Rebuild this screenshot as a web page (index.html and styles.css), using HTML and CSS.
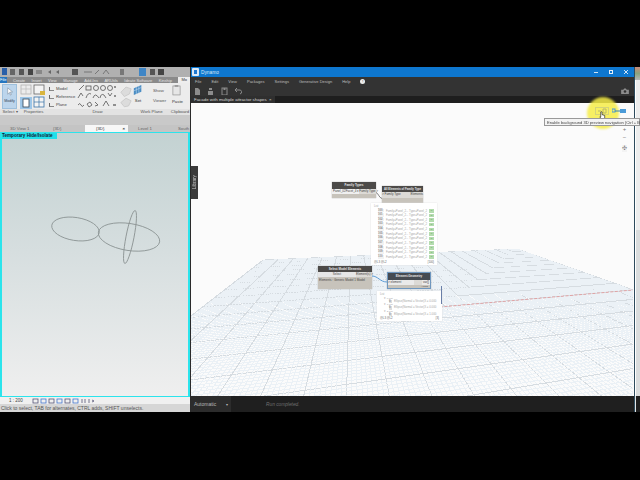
FILE: index.html
```html
<!DOCTYPE html>
<html lang="en">
<head>
<meta charset="utf-8">
<title>Revit and Dynamo</title>
<link rel="stylesheet" href="styles.css">
</head>
<body>
<div class="screen">
  <section class="revit">
    <div class="qat">
      <svg class="qat-icons" viewBox="0 0 190 10"><rect x="2" y="1" width="5" height="7" fill="#2a5fa8"/><rect x="10" y="2" width="5" height="6" fill="#666"/><rect x="19" y="2" width="5" height="6" fill="#555"/><rect x="28" y="2" width="5" height="6" fill="#444"/><rect x="36" y="3" width="6" height="4" fill="#888"/><path d="M48 5l3-2v4zM56 5l3-2v4z" fill="#666"/><rect x="72" y="2" width="6" height="6" fill="#555"/><path d="M84 5h8M95 7l4-4M103 7l3-4 3 4" stroke="#777" fill="none"/><rect x="120" y="2" width="4" height="6" fill="#777"/><rect x="139" y="1" width="7" height="8" fill="#3f86c6"/><rect x="150" y="2" width="5" height="6" fill="#555"/><rect x="158" y="2" width="6" height="6" fill="#444"/></svg>
    </div>
    <nav class="tabs">
      <span class="tab-file">File</span><span>Create</span><span>Insert</span><span>View</span><span>Manage</span><span>Add-Ins</span><span>ARUtils</span><span>Ideate Software</span><span>Kinship</span><span class="tab-active">Mo</span>
    </nav>
    <div class="ribbon">
      <div class="panel panel-select">
        <div class="modify"><svg viewBox="0 0 10 10" class="cursor-icon"><path d="M3 1v7l2-2 1 3 1-.5-1-3h2.500z" fill="#fff" stroke="#789"  stroke-width=".6"/></svg><span>Modify</span></div>
        <div class="panel-label">Select ▾</div>
      </div>
      <div class="panel panel-props">
        <svg class="props-icons" viewBox="0 0 27 25"><rect x="1" y="1" width="10" height="9" fill="#ececec" stroke="#aaa" stroke-width=".7"/><path d="M6 1v9M1 5h10" stroke="#bbb" stroke-width=".7"/><rect x="14" y="1" width="10" height="9" fill="#f4f4f4" stroke="#666" stroke-width=".8"/><rect x="20" y="7" width="5" height="4" fill="#d9b53d"/><rect x="0" y="13" width="12" height="12" fill="#9dc6e8"/><rect x="3" y="15" width="6" height="8" fill="#fff" stroke="#345" stroke-width=".8"/><rect x="14" y="13" width="10" height="10" fill="#f4f4f4" stroke="#3b73a8" stroke-width=".8"/><path d="M14 18h10M19 13v10" stroke="#3b73a8" stroke-width=".7"/></svg>
        <div class="panel-label">Properties</div>
      </div>
      <div class="panel panel-model">
        <ul class="model-list"><li>Model</li><li>Reference</li><li>Plane</li></ul>
        <div class="panel-label">&nbsp;</div>
      </div>
      <div class="panel panel-draw">
        <svg class="draw-icons" viewBox="0 0 42 24"><g fill="none" stroke="#555" stroke-width=".8"><path d="M2 6l5-5"/><rect x="9" y="2" width="5" height="4"/><circle cx="19" cy="4" r="2.500"/><circle cx="26" cy="4" r="2.500"/><circle cx="33" cy="4" r="2.500"/><path d="M1 14l3-5 2 3M9 14q2-6 5-4M16 14q2-6 6 0M23 14q1-5 4-3l2 3M31 9l2 3 2-3"/><path d="M1 21q2-3 3 0t3 0M10 20l3-2 2 3-3 2zM18 18l3 3-3 1M26 22l3-5 3 5"/></g><path d="M37 3h2M37 12h2M36 21h3" stroke="#333"/></svg>
        <div class="panel-label">Draw</div>
      </div>
      <div class="panel panel-faded">
        <svg class="faded-icons" viewBox="0 0 14 26"><path d="M1 8l6-6 6 2-2 6-6 3zM1 20l6-5 6 3-3 6-5 1z" fill="#dcdcdc" stroke="#c9c9c9"/></svg>
        <div class="panel-label">&nbsp;</div>
      </div>
      <div class="panel panel-work">
        <div class="work-row">
          <div class="work-set"><svg viewBox="0 0 12 14"><path d="M1 5l9-4v8l-9 4z" fill="#4b8dc4"/><path d="M1 8l9-4M4 3v9M7 2v9" stroke="#cfe3f4" stroke-width=".6"/></svg><span>Set</span></div>
          <ul class="work-list"><li>Show</li><li>Viewer</li></ul>
        </div>
        <div class="panel-label">Work Plane</div>
      </div>
      <div class="panel panel-clip">
        <div class="paste"><svg viewBox="0 0 10 13"><rect x="1" y="2" width="8" height="10" fill="#e6e6e6" stroke="#8a8a8a" stroke-width=".7"/><rect x="3" y="1" width="4" height="2" fill="#9a9a9a"/></svg><span>Paste</span></div>
        <div class="panel-label">Clipboard</div>
      </div>
    </div>
    <div class="band"></div>
    <div class="view-tabs">
      <span class="vtab">3D View 1</span><span class="vtab">{3D}</span><span class="vtab vtab-active">{3D} <b>×</b></span><span class="vtab">Level 1</span><span class="vtab vtab-last">South</span>
    </div>
    <div class="viewport">
      <div class="temp-label">Temporary Hide/Isolate</div>
      <svg class="sketch" viewBox="0 0 186 265">
        <g fill="none" stroke="#8e9696" stroke-width=".9">
          <ellipse cx="73.500" cy="96" rx="24" ry="11.500" transform="rotate(9 73.500 96)"/>
          <ellipse cx="127" cy="104" rx="31" ry="13.500" transform="rotate(9 127 104)"/>
          <ellipse cx="128" cy="104" rx="27" ry="4" transform="rotate(-79 128 104)"/>
        </g>
      </svg>
    </div>
    <div class="scale-row"><span>1 : 200</span><svg viewBox="0 0 62 6" class="scale-icons"><g fill="none" stroke="#557" stroke-width=".8"><rect x="1" y="1" width="5" height="4"/><rect x="9" y="1" width="5" height="4" stroke="#47c"/><rect x="17" y="1" width="5" height="4"/><rect x="25" y="1" width="5" height="4" stroke="#47c"/><rect x="33" y="1" width="5" height="4"/><rect x="41" y="1" width="5" height="4" stroke="#47c"/><path d="M50 1v4M53 1v4M57 1v4M60 2l2 1-2 1"/></g></svg></div>
    <div class="status">Click to select, TAB for alternates, CTRL adds, SHIFT unselects.</div>
  </section>

  <section class="dynamo">
    <header class="dyn-title"><svg class="dyn-logo" viewBox="0 0 7 8"><rect width="7" height="8" rx="1" fill="#dbe9f7"/><rect x="2" y="2" width="3" height="4" fill="#1f78d1"/></svg><span>Dynamo</span>
      <div class="win-ctrls"><span class="win-min"></span><span class="win-max"></span><svg class="win-close" viewBox="0 0 4 4"><path d="M0 0l4 4M4 0l-4 4" stroke="#fff" stroke-width=".8"/></svg></div>
    </header>
    <nav class="dyn-menu"><span>File</span><span>Edit</span><span>View</span><span>Packages</span><span>Settings</span><span>Generative Design</span><span>Help</span><i class="info">!</i></nav>
    <div class="dyn-tools">
      <svg viewBox="0 0 60 8" class="tool-icons"><g fill="#8c8c8c"><path d="M0 1h3l2 2v5H0z"/><path d="M13 4h5v4h-5zM14 1h3v2h-3z"/><rect x="27" y="1" width="5" height="7" fill="none" stroke="#8c8c8c"/><rect x="28.500" y="1" width="2" height="2"/></g><path d="M40 3h4a2 2 0 0 1 1 4M40 3l2-2M40 3l2 2" fill="none" stroke="#8c8c8c"/></svg>
      <svg viewBox="0 0 9 7" class="camera"><path d="M0 2h2.500l1-1.500h2l1 1.500H9v5H0z" fill="#8c8c8c"/><circle cx="4.500" cy="4" r="1.500" fill="#333"/></svg>
    </div>
    <div class="dyn-tabbar"><span class="dyn-tab">Facade with multiple attractor shapes <b>×</b></span></div>
    <main class="canvas">
      <svg id="grid" class="grid" width="442" height="293" viewBox="191 103 442 293"></svg>

      <div class="library">Library</div>

      <div class="node n-family"><div class="nhead">Family Types</div><div class="nports"><span class="combo">Panel_02Facet_4 ▾</span><span>Family Type &gt;</span></div></div>
      <div class="node n-all"><div class="nhead">All Elements of Family Type</div><div class="nports"><span>&gt; Family Type</span><span>Elements</span></div></div>
      <svg class="wire wire-a" viewBox="0 0 10 12"><path d="M0 1C4 2 5 10 10 11" stroke="#333" fill="none"/></svg>

      <div class="watch w-family">
        <div class="wlabel">List</div>
        <div class="wrow"><b>100</b><span>Family=Panel_2... Type=Panel_2</span><em>ID</em></div>
        <div class="wrow"><b>101</b><span>Family=Panel_2... Type=Panel_2</span><em>ID</em></div>
        <div class="wrow"><b>102</b><span>Family=Panel_2... Type=Panel_2</span><em>ID</em></div>
        <div class="wrow"><b>103</b><span>Family=Panel_2... Type=Panel_2</span><em>ID</em></div>
        <div class="wrow"><b>104</b><span>Family=Panel_2... Type=Panel_2</span><em>ID</em></div>
        <div class="wrow"><b>105</b><span>Family=Panel_2... Type=Panel_2</span><em>ID</em></div>
        <div class="wrow"><b>106</b><span>Family=Panel_2... Type=Panel_2</span><em>ID</em></div>
        <div class="wrow"><b>107</b><span>Family=Panel_2... Type=Panel_2</span><em>ID</em></div>
        <div class="wrow"><b>108</b><span>Family=Panel_2... Type=Panel_2</span><em>ID</em></div>
        <div class="wrow"><b>109</b><span>Family=Panel_2... Type=Panel_2</span><em>ID</em></div>
        <div class="wrow"><b>110</b><span>Family=Panel_2... Type=Panel_2</span><em>ID</em></div>
        <div class="wfoot"><span>@L3 @L2</span><span>{100}</span></div>
      </div>

      <div class="node n-select"><div class="nhead">Select Model Elements</div><div class="nports"><span class="btn">Select</span><span>Element(s) &gt;</span></div><div class="ninfo">Elements : Generic Model 1 Model</div></div>
      <div class="node n-geom"><div class="nhead">Element.Geometry</div><div class="nports"><span class="inport">&gt; element</span><span class="outport">var[]</span></div><div class="nauto">AUTO</div></div>
      <svg class="wire wire-b" viewBox="0 0 15 8"><path d="M0 1C6 1 8 7 15 7" stroke="#5b9bd5" fill="none"/></svg>

      <div class="watch w-geom">
        <div class="wlabel">List</div>
        <div class="wsub">▾ 0 List</div>
        <div class="wrow"><b>0</b><span>Ellipse(Normal = Vector(X = 0.000</span></div>
        <div class="wsub">▾ 1 List</div>
        <div class="wrow"><b>0</b><span>Ellipse(Normal = Vector(X = 0.000</span></div>
        <div class="wsub">▾ 2 List</div>
        <div class="wrow"><b>0</b><span>Ellipse(Normal = Vector(X = 1.000</span></div>
        <div class="wfoot"><span>@L3 @L2</span><span>{3}</span></div>
        <span class="wscroll"></span>
      </div>

      <div class="highlight"></div>
      <div class="nav-icons">
        <svg class="nav-cam" viewBox="0 0 14 8"><rect x=".5" y=".5" width="13" height="7" fill="none" stroke="#d4d47a"/><path d="M3 4h3M8 2h3v4H8z" fill="none" stroke="#b9b96a"/></svg>
        <svg class="nav-graph" viewBox="0 0 14 8"><rect x="0" y="2" width="3" height="3" fill="none" stroke="#4b9bd8"/><rect x="8" y="2" width="6" height="4" fill="#4b9bd8"/><path d="M3 4h5" stroke="#2f7fb8"/></svg>
      </div>
      <div class="zoom-ctrls"><span>+</span><span>−</span><span class="fit">✣</span></div>
      <svg class="hand" viewBox="0 0 8 10"><path d="M2 1a1 1 0 0 1 1.500 0v3l3 1v3l-1 2H3L1 6.500l1 0z" fill="#fff" stroke="#111" stroke-width=".7"/></svg>
    </main>
    <footer class="dyn-foot"><div class="run-mode"><span>Automatic</span><i>▾</i></div><span class="run-state">Run completed.</span></footer>
    <div class="tip">Enable background 3D preview navigation (Ctrl + B)</div>
  </section>
  <aside class="sliver"><span class="sl-top"></span><span class="sl-light"></span><span class="sl-noise"></span><span class="sl-dark"></span></aside>
</div>
<script src="grid.js"></script>
</body>
</html>
```

FILE: styles.css
```css
* { box-sizing: border-box; }
html, body { margin: 0; height: 100%; background: #000; overflow: hidden; }
body { font-family: "Liberation Sans", Arial, sans-serif; color: #333; }
ul { list-style: none; margin: 0; padding: 0; }
svg { display: block; }

.screen {
  width: 640px; height: 480px; padding: 67px 0 68px;
  display: flex; background: #000; filter: blur(.4px);
}

/* Revit */
.revit { width: 190px; display: flex; flex-direction: column; background: #e4e4e4; overflow: hidden; }
.qat { height: 10px; background: #b0b0b0; }
.qat-icons { width: 190px; height: 10px; }
.tabs { height: 6px; background: #8a8a8a; display: flex; align-items: center; gap: 6.500px; color: #e4e4e4; font-size: 4px; white-space: nowrap; }
.tab-file { background: #2576c0; color: #fff; width: 13px; height: 6px; line-height: 6px; text-align: center; }
.tab-active { background: #eee; color: #333; height: 6px; line-height: 6px; padding: 0 3px; flex: 1; }
.ribbon { height: 32px; background: #ececec; display: flex; }
.panel { display: flex; flex-direction: column; justify-content: space-between; font-size: 4.300px; white-space: nowrap; padding-top: 1px; }
.panel-label { height: 6px; line-height: 6px; text-align: center; color: #555; background: #e2e2e2; }
.panel-select { width: 20px; }
.modify { width: 15px; height: 25px; margin-left: 2px; background: #bcd5ec; border: 1px solid #9dbfdc; display: flex; flex-direction: column; align-items: center; gap: 3px; font-size: 3.600px; color: #345; }
.cursor-icon { width: 9px; height: 9px; margin-top: 2px; }
.panel-props { width: 27px; }
.props-icons { width: 27px; height: 25px; }
.panel-model { width: 29px; }
.model-list { padding: 2px 0 0 9px; display: flex; flex-direction: column; gap: 3px; font-size: 4.200px; line-height: 5px; color: #444; }
.model-list li { position: relative; }
.model-list li::before { content: ""; position: absolute; left: -7px; top: 1px; width: 4px; height: 3px; border-left: 1px solid #666; border-bottom: 1px solid #888; }
.panel-draw { width: 43px; }
.draw-icons { width: 42px; height: 24px; margin-left: 1px; }
.panel-faded { width: 14px; }
.faded-icons { width: 12px; height: 25px; margin-left: 1px; }
.panel-work { width: 37px; }
.work-row { display: flex; gap: 5px; }
.work-set { width: 10px; font-size: 4.300px; text-align: center; }
.work-set svg { width: 10px; height: 12px; margin-bottom: 2px; }
.work-list { padding-top: 4px; display: flex; flex-direction: column; gap: 5px; line-height: 5px; color: #555; padding-left: 5px; }
.panel-clip { flex: 1; }
.paste { width: 10px; margin-left: 2px; font-size: 4.300px; }
.paste svg { width: 9px; height: 12px; margin: 0 0 3px; }
.band { height: 10px; background: #c9c9c9; }
.view-tabs { height: 7px; background: #c4c4c4; display: flex; font-size: 4.300px; line-height: 7px; white-space: nowrap; color: #666; }
.vtab { width: 43px; padding-left: 10px; flex: none; }
.vtab:nth-child(2) { width: 42px; }
.vtab-active { background: #f7f7f7; color: #333; width: 43px; padding-left: 11px; display: flex; justify-content: space-between; padding-right: 3px; }
.vtab-last { width: 19px; padding-left: 7px; }
.viewport {
  height: 266px; border: 1.500px solid #2be4ec; border-left-width: 2px; border-right-width: 2px;
  background: linear-gradient(#c3d2d2 0, #d6dedf 45%, #efefef 100%);
  position: relative;
}
.temp-label { width: 55px; height: 6.500px; background: #20e0ea; color: #123; font-size: 4.600px; font-weight: bold; line-height: 6.500px; white-space: nowrap; }
.sketch { position: absolute; left: 0; top: 0; width: 186px; height: 265px; }
.scale-row { height: 7px; background: #f0f0f0; display: flex; align-items: center; gap: 9px; padding-left: 9px; font-size: 4.500px; color: #444; }
.scale-icons { width: 62px; height: 6px; }
.status { height: 8px; background: #d6d6d6; font-size: 5px; line-height: 8px; padding-left: 1px; color: #555; white-space: nowrap; }

/* Dynamo */
.dynamo { width: 444px; display: flex; flex-direction: column; background: #2b2b2b; position: relative; padding: 0 0 0 1px; }
.dyn-title { height: 10px; background: #0e77cf; display: flex; align-items: center; gap: 2px; padding-left: 1px; color: #dbe9f7; font-size: 4.800px; }
.dyn-logo { width: 7px; height: 8px; }
.win-ctrls { margin-left: auto; display: flex; align-items: center; gap: 11px; padding-right: 6px; }
.win-min { width: 4px; height: 1px; background: #cfe3f4; }
.win-max { width: 4px; height: 4px; border: 1px solid #e6f0fa; }
.win-close { width: 4px; height: 4px; }
.dyn-menu { height: 9px; background: #333; display: flex; align-items: center; gap: 10px; padding-left: 4px; color: #bdbdbd; font-size: 4px; line-height: 5px; white-space: nowrap; }
.info { width: 5px; height: 5px; border-radius: 50%; background: #eee; color: #333; font-size: 4px; line-height: 5px; text-align: center; font-style: normal; }
.dyn-tools { height: 10px; background: #333; display: flex; justify-content: space-between; align-items: center; padding: 0 5px 0 4px; }
.tool-icons { width: 60px; height: 8px; }
.camera { width: 8px; height: 6px; }
.dyn-tabbar { height: 7px; background: #1e1e1e; display: flex; }
.dyn-tab { background: #2f2f2f; color: #d6d6d6; font-size: 4.400px; line-height: 7px; padding: 0 3px; white-space: nowrap; }
.dyn-tab b { font-weight: normal; margin-left: 1px; }

.canvas { height: 293px; background: #fbfbfb; position: relative; }
.grid { position: absolute; left: 0; top: 0; }
.library { position: absolute; left: 0; top: 63px; width: 7px; height: 33px; background: #3b3b3b; color: #ccc; font-size: 4.500px; writing-mode: vertical-rl; transform: rotate(180deg); text-align: center; line-height: 7px; }

.node { position: absolute; background: #c7c3bb; font-size: 3px; color: #444; white-space: nowrap; box-shadow: 0 0 1px #999; }
.nhead { background: #4c4a48; color: #e8e8e8; font-weight: bold; text-align: center; height: 6px; line-height: 6px; }
.nports { display: flex; justify-content: space-between; height: 5px; line-height: 5px; background: #dcdad6; }
.n-family { left: 141px; top: 79px; width: 44px; height: 16px; }
.n-family .nhead { height: 6.500px; }
.combo { background: #f0f0f0; padding-left: 1px; }
.n-all { left: 191px; top: 83px; width: 41px; height: 18px; }
.n-all .nhead { height: 5.500px; font-size: 2.800px; }
.n-all .nports { height: 6px; }
.n-select { left: 127px; top: 163px; width: 54px; height: 23px; }
.btn { flex: 0 0 38px; text-align: center; background: #e6e6e6; }
.ninfo { padding: 1px; line-height: 5px; height: 7px; }
.n-geom { left: 196px; top: 169px; width: 44px; height: 17px; border: .5px solid #6f97bf; }
.n-geom .nhead { height: 6.500px; background: #464b52; }
.inport { flex: 0 0 26px; background: #eaeaea; }
.outport { flex: 0 0 8px; background: #eaeaea; text-align: center; }
.nauto { text-align: right; font-size: 2.500px; line-height: 4px; padding-right: 2px; }
.wire { position: absolute; }
.wire-a { left: 185px; top: 87px; width: 6px; height: 11px; }
.wire-b { left: 181px; top: 172px; width: 15px; height: 8px; }

.watch { position: absolute; background: #fff; font-size: 2.800px; color: #a6a6a6; white-space: nowrap; box-shadow: 0 0 1.500px #ddd; padding: 2px 3px; }
.w-family { left: 180px; top: 100px; width: 66px; height: 62px; }
.wlabel { height: 3.500px; line-height: 3.500px; }
.wrow { display: flex; gap: 2px; height: 4.650px; line-height: 4.650px; padding-left: 4px; }
.wrow b { width: 6px; color: #888; background: #f2f2f2; height: 3.600px; line-height: 3.600px; }
.wrow span { flex: 1; }
.wrow em { width: 5px; height: 3.500px; line-height: 3.500px; background: #b4dcae; color: #6b9e66; font-style: normal; text-align: center; font-size: 2px; margin-top: .5px; }
.wfoot { position: absolute; left: 3px; right: 3px; bottom: 1px; display: flex; justify-content: space-between; color: #666; font-size: 2.800px; line-height: 4px; }
.w-geom { left: 186px; top: 188px; width: 65px; height: 30px; }
.w-geom .wrow { padding-left: 9px; height: 3.600px; line-height: 3.600px; }
.w-geom .wrow b { width: 3px; background: #ddd; }
.wsub { height: 3px; line-height: 3px; padding-left: 4px; font-size: 2.500px; }
.wscroll { position: absolute; right: 0; top: -5px; width: 1px; height: 18px; background: #6a7fa8; }

.nav-icons { position: absolute; left: 404px; top: 4px; display: flex; gap: 3px; align-items: center; }
.nav-cam { width: 14px; height: 8px; }
.nav-graph { width: 14px; height: 8px; }
.zoom-ctrls { position: absolute; left: 430px; top: 23px; width: 7px; display: flex; flex-direction: column; gap: 1px; align-items: center; color: #777; font-size: 6px; line-height: 7px; }
.zoom-ctrls .fit { margin-top: 3px; font-size: 6px; background: #f3f3f3; }
.highlight { position: absolute; left: 396px; top: -6px; width: 32px; height: 32px; border-radius: 50%; background: rgba(246, 236, 70, .85); filter: blur(1px); }
.hand { position: absolute; left: 408px; top: 8px; width: 7px; height: 9px; }

.dyn-foot { height: 16px; background: #1f1f1f; display: flex; align-items: center; font-size: 5px; color: #8c8c8c; }
.run-mode { width: 40px; height: 16px; background: #2c2c2c; display: flex; justify-content: space-between; align-items: center; padding: 0 3px; margin-right: 35px; color: #b6b6b6; }
.run-mode i { font-style: normal; font-size: 4px; }
.run-state { font-style: italic; font-size: 4.800px; color: #6f6f6f; }
.tip { position: absolute; left: 354px; top: 51px; width: 96px; height: 8px; background: #f4f4f4; border: .5px solid #999; font-size: 4.100px; line-height: 7px; padding-left: 2px; color: #444; white-space: nowrap; z-index: 3; }

.sliver { flex: 1; display: flex; flex-direction: column; background: #e6e7e8; border-left: 1px solid #2d4a5c; }
.sl-top { height: 13px; background: linear-gradient(#c98a7a, #8aa37e 50%, #b7b7b7); }
.sl-light { height: 150px; background: #eceded; border-left: 1px solid #fff; }
.sl-noise { flex: 1; background: #d9dcdd; border-left: 1px solid #fff; }
.sl-dark { height: 16px; background: #1f1f1f; border-left: 1px solid #dfe3e5; }
```

FILE: grid.js
```js
// Builds the perspective ground grid of the 3D preview from its two vanishing points.
(function () {
  var svg = document.getElementById('grid');
  var NS = 'http://www.w3.org/2000/svg';
  var B = [517, 249], VP1 = [352, 191], VP2 = [1662, 199];
  var a = 0.1816, b = 0.826, N = 160;
  svg.setAttribute('shape-rendering', 'crispEdges');

  function pt(u, v) {
    var d = 1 - a * u - b * v;
    return [(B[0] - a * u * VP2[0] - b * v * VP1[0]) / d,
            (B[1] - a * u * VP2[1] - b * v * VP1[1]) / d];
  }
  function line(p, q, color, width) {
    var l = document.createElementNS(NS, 'line');
    l.setAttribute('x1', p[0].toFixed(2));
    l.setAttribute('y1', p[1].toFixed(2));
    l.setAttribute('x2', q[0].toFixed(2));
    l.setAttribute('y2', q[1].toFixed(2));
    l.setAttribute('stroke', color);
    l.setAttribute('stroke-width', width);
    svg.appendChild(l);
  }
  var EPS = 0.02;
  for (var i = 0; i <= N; i++) {
    var t = i / N;
    var major = i % 8 === 0;
    var color = major ? '#d6dce1' : '#ebf1f6';
    // lines running towards VP1
    var vmax = Math.min(1, (1 - a * t - EPS) / b);
    line(pt(t, 0), pt(t, vmax), color, 1);
    // lines running towards VP2
    var umax = Math.min(1, (1 - b * t - EPS) / a);
    if (umax > 0) line(pt(0, t), pt(umax, t), color, 1);
  }
  var red = document.createElementNS(NS, 'line');
  red.setAttribute('x1', 440); red.setAttribute('y1', 307);
  red.setAttribute('x2', 633); red.setAttribute('y2', 290);
  red.setAttribute('stroke', '#e58a8a');
  red.setAttribute('stroke-width', 0.7);
  red.setAttribute('stroke-dasharray', '3 1.5');
  red.setAttribute('shape-rendering', 'auto');
  svg.appendChild(red);
})();
```
